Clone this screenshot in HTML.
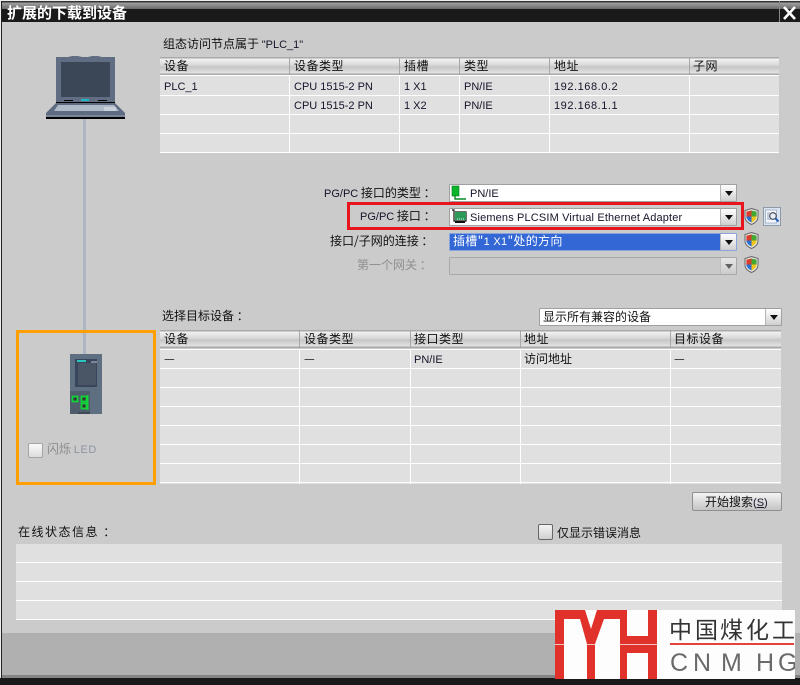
<!DOCTYPE html>
<html><head><meta charset="utf-8"><style>
html,body{margin:0;padding:0;background:#fff}
#p{position:relative;width:800px;height:685px;overflow:hidden;background:#cbcbcb;font:12px "WenQuanYi Zen Hei","Noto Sans CJK SC",sans-serif;color:#111}
#p div,#p svg{position:absolute}
.t{white-space:nowrap;line-height:14px;height:14px}
b{font:11px "Liberation Sans",sans-serif;color:#14142a}
.tb{background:#e0e0e0}
.h{background:linear-gradient(#a9a9a9 0,#a9a9a9 1px,#f1f1f1 2px,#d9d9d9 8px,#c6c6c6 10px,#e2e2e2 16px,#a9a9a9 17px,#a9a9a9 18px);height:18px}
.hs{width:1px;height:18px;background:#a8a8a8}
.rl{height:1px;background:#fff}
.cl{width:1px;background:#fff}
.hd{letter-spacing:.5px}
.cb{background:#fff;border:1px solid #a0a0a0;box-sizing:border-box;height:18px;border-radius:1px}
.ar{background:linear-gradient(#fdfdfd,#e8e8e8 50%,#cfcfcf);border-left:1px solid #b5b5b5;right:0;top:0;bottom:0;width:15px}
.ar:after{content:"";position:absolute;left:4px;top:6px;border:4px solid transparent;border-top:5px solid #111;border-bottom:0}
.ip{letter-spacing:.55px}
</style></head><body><div id="p">
<!-- title -->
<div style="left:0;top:0;width:800px;height:1px;background:#eee"></div>
<div style="left:0;top:1px;width:800px;height:8px;background:linear-gradient(#333 0,#333 1px,#a0a0a0 2px,#6a6a6a 8px)"></div>
<div style="left:0;top:9px;width:800px;height:13px;background:#1a1a1a"></div>
<div class="t" style="left:7px;top:3px;height:20px;line-height:20px;font:bold 15px/20px 'Noto Sans CJK SC',sans-serif;color:#fff">扩展的下载到设备</div>
<div style="left:779px;top:1px;width:1px;height:21px;background:#888"></div>
<svg style="left:780px;top:2px" width="18" height="20"><path d="M4 5L15 17M15 5L4 17" stroke="#fff" stroke-width="2.6"/></svg>
<div style="left:1px;top:1px;width:1px;height:677px;background:#222"></div>
<div style="left:0;top:0;width:1px;height:685px;background:#eee"></div>

<!-- footer -->
<div style="left:2px;top:633px;width:798px;height:42px;background:#b0b0b0"></div>
<div style="left:2px;top:675px;width:798px;height:3px;background:#848484"></div>
<div style="left:0;top:678px;width:800px;height:7px;background:#1a1a1a"></div>

<!-- top table -->
<div class="t" style="left:163px;top:37px">组态访问节点属于 <b>"PLC_1"</b></div>
<div class="tb" style="left:160px;top:76px;width:619px;height:77px"></div>
<div class="h" style="left:160px;top:57px;width:619px"></div>
<div class="hs" style="left:289px;top:57px"></div><div class="hs" style="left:399px;top:57px"></div><div class="hs" style="left:459px;top:57px"></div><div class="hs" style="left:549px;top:57px"></div><div class="hs" style="left:689px;top:57px"></div>
<div class="rl" style="left:160px;top:75px;width:619px"></div>
<div class="rl" style="left:160px;top:95px;width:619px"></div><div class="rl" style="left:160px;top:114px;width:619px"></div><div class="rl" style="left:160px;top:133px;width:619px"></div><div class="rl" style="left:160px;top:152px;width:619px"></div>
<div class="cl" style="left:289px;top:76px;height:77px"></div><div class="cl" style="left:399px;top:76px;height:77px"></div><div class="cl" style="left:459px;top:76px;height:77px"></div><div class="cl" style="left:549px;top:76px;height:77px"></div><div class="cl" style="left:689px;top:76px;height:77px"></div>
<div class="t hd" style="left:164px;top:59px">设备</div><div class="t hd" style="left:294px;top:59px">设备类型</div><div class="t hd" style="left:404px;top:59px">插槽</div><div class="t hd" style="left:464px;top:59px">类型</div><div class="t hd" style="left:554px;top:59px">地址</div><div class="t hd" style="left:693px;top:59px">子网</div>
<div class="t" style="left:164px;top:79px"><b>PLC_1</b></div><div class="t" style="left:294px;top:79px"><b>CPU 1515-2 PN</b></div><div class="t" style="left:404px;top:79px"><b>1 X1</b></div><div class="t" style="left:464px;top:79px"><b>PN/IE</b></div><div class="t ip" style="left:554px;top:79px"><b>192.168.0.2</b></div>
<div class="t" style="left:294px;top:98px"><b>CPU 1515-2 PN</b></div><div class="t" style="left:404px;top:98px"><b>1 X2</b></div><div class="t" style="left:464px;top:98px"><b>PN/IE</b></div><div class="t ip" style="left:554px;top:98px"><b>192.168.1.1</b></div>

<!-- laptop + line -->
<div style="left:83px;top:118px;width:3px;height:236px;background:#aeb6c4"></div>
<svg style="left:40px;top:50px" width="92" height="72" viewBox="40 50 92 72">
<path d="M56 57h12l4-1h6l4 1h6l4-1h6l4 1h13v45H56z" fill="#616d82"/>
<rect x="61" y="62" width="49" height="35" fill="#3b4656"/>
<rect x="56" y="102" width="59" height="1" fill="#000"/>
<rect x="64" y="100" width="9" height="1" fill="#000"/><rect x="98" y="100" width="9" height="1" fill="#000"/>
<rect x="81" y="99" width="8" height="2" fill="#1cb9c4"/>
<path d="M56 103h59l10 10v4H46v-4z" fill="#5f6b80"/>
<path d="M58 105h56l5 6H54z" fill="#b0b9c8"/>
<rect x="104" y="107" width="12" height="4" fill="#c9d0da"/>
<rect x="46" y="115" width="79" height="2" fill="#7c869a"/>
<rect x="46" y="117" width="79" height="2" fill="#000"/>
</svg>

<!-- form -->
<div class="t" style="left:324px;top:186px;width:102px;color:#111"><b>PG/PC</b> 接口的类型 ：</div>
<div class="t" style="left:360px;top:209px"><b>PG/PC</b> 接口 ：</div>
<div class="t" style="left:330px;top:234px">接口/子网的连接 ：</div>
<div class="t" style="left:357px;top:258px;color:#8f8f8f">第一个网关 ：</div>

<div style="left:347px;top:202px;width:397px;height:28px;box-sizing:border-box;border:3px solid #e8141e"></div>
<div class="cb" style="left:449px;top:184px;width:288px"><div class="ar"></div></div>
<div class="cb" style="left:449px;top:208px;width:288px"><div class="ar"></div></div>
<div class="cb" style="left:449px;top:233px;width:288px;background:#3367d6;border-color:#8aa3d8"><div class="ar"></div></div>
<div class="cb" style="left:449px;top:257px;width:288px;background:#c9c9c9;border-color:#a8a8a8"><div class="ar" style="opacity:.55"></div></div>
<svg style="left:451px;top:185px" width="17" height="16"><rect x="1" y="1" width="7" height="10" fill="#0cb52a" stroke="#0a7a1f" stroke-width=".6"/><path d="M4 10v4h11" fill="none" stroke="#0a8a25" stroke-width="1.4"/></svg>
<div class="t" style="left:470px;top:186px"><b>PN/IE</b></div>
<svg style="left:451px;top:209px" width="17" height="15"><path d="M1 1h2v11h12V3H4" fill="none" stroke="#111" stroke-width="1.2"/><rect x="4" y="3" width="11" height="8" fill="#2c9a58"/><path d="M6 10h1M8 10h1M10 10h1M12 10h1" stroke="#dfe" stroke-width="1"/><rect x="4" y="12" width="10" height="2" fill="#111"/></svg>
<div class="t" style="left:470px;top:210px"><b style="letter-spacing:.15px">Siemens PLCSIM Virtual Ethernet Adapter</b></div>
<div class="t" style="left:453px;top:234px;color:#fff;letter-spacing:.3px">插槽"<b style="color:#fff">1 X1</b>"处的方向</div>

<!-- shields -->
<svg style="left:744px;top:208px" width="15" height="17" viewBox="0 0 15 17"><path d="M7.5 .5L14 2.5V9c0 3.5-3 6-6.5 7.5C4 15 1 12.500 1 9V2.500z" fill="#e8e8e8" stroke="#666"/><path d="M7.500 2.400L2.400 3.800V8.500h5.100z" fill="#d8402a"/><path d="M7.500 2.400L12.600 3.800V8.500H7.500z" fill="#45a834"/><path d="M2.400 8.500h5.100V14.500C5 13.500 2.400 11 2.400 8.500z" fill="#2a6fd0"/><path d="M12.600 8.500H7.500V14.500C10 13.500 12.600 11 12.600 8.500z" fill="#f2c41c"/></svg>
<svg style="left:744px;top:232px" width="15" height="17" viewBox="0 0 15 17"><path d="M7.5 .5L14 2.5V9c0 3.5-3 6-6.5 7.5C4 15 1 12.500 1 9V2.500z" fill="#e8e8e8" stroke="#666"/><path d="M7.500 2.400L2.400 3.800V8.500h5.100z" fill="#d8402a"/><path d="M7.500 2.400L12.600 3.800V8.500H7.500z" fill="#45a834"/><path d="M2.400 8.500h5.100V14.500C5 13.500 2.400 11 2.400 8.500z" fill="#2a6fd0"/><path d="M12.600 8.500H7.500V14.500C10 13.500 12.600 11 12.600 8.500z" fill="#f2c41c"/></svg>
<svg style="left:744px;top:256px" width="15" height="17" viewBox="0 0 15 17"><path d="M7.5 .5L14 2.5V9c0 3.5-3 6-6.5 7.5C4 15 1 12.500 1 9V2.500z" fill="#e8e8e8" stroke="#666"/><path d="M7.500 2.400L2.400 3.800V8.500h5.100z" fill="#d8402a"/><path d="M7.500 2.400L12.600 3.800V8.500H7.500z" fill="#45a834"/><path d="M2.400 8.500h5.100V14.500C5 13.500 2.400 11 2.400 8.500z" fill="#2a6fd0"/><path d="M12.600 8.500H7.500V14.500C10 13.500 12.600 11 12.600 8.500z" fill="#f2c41c"/></svg>
<svg style="left:763px;top:207px" width="18" height="19"><rect x=".5" y=".5" width="17" height="18" fill="#dbe5f1" stroke="#8f9aa8"/><rect x="2.500" y="3" width="11" height="13" fill="#f4f7fb" stroke="#8fa0b8" stroke-width=".7"/><path d="M4 6h3M4 8h2M4 10h2M4 12h5" stroke="#6f86a8" stroke-width=".8"/><circle cx="10" cy="9" r="3.300" fill="#e6eef6" stroke="#445" stroke-width="1.100"/><path d="M12.500 11.500l3 3" stroke="#2a5fc0" stroke-width="2"/></svg>

<!-- target devices -->
<div class="t" style="left:162px;top:309px">选择目标设备 ：</div>
<div class="cb" style="left:539px;top:308px;width:243px"><div class="ar"></div><div class="t" style="left:3px;top:1px">显示所有兼容的设备</div></div>

<div class="tb" style="left:160px;top:349px;width:621px;height:135px"></div>
<div class="h" style="left:160px;top:330px;width:621px"></div>
<div class="hs" style="left:299px;top:330px"></div><div class="hs" style="left:410px;top:330px"></div><div class="hs" style="left:520px;top:330px"></div><div class="hs" style="left:670px;top:330px"></div>
<div class="rl" style="left:160px;top:349px;width:621px"></div><div class="rl" style="left:160px;top:368px;width:621px"></div><div class="rl" style="left:160px;top:387px;width:621px"></div><div class="rl" style="left:160px;top:406px;width:621px"></div><div class="rl" style="left:160px;top:425px;width:621px"></div><div class="rl" style="left:160px;top:444px;width:621px"></div><div class="rl" style="left:160px;top:463px;width:621px"></div><div class="rl" style="left:160px;top:482px;width:621px"></div>
<div class="cl" style="left:299px;top:349px;height:135px"></div><div class="cl" style="left:410px;top:349px;height:135px"></div><div class="cl" style="left:520px;top:349px;height:135px"></div><div class="cl" style="left:670px;top:349px;height:135px"></div>
<div class="t hd" style="left:164px;top:332px">设备</div><div class="t hd" style="left:304px;top:332px">设备类型</div><div class="t hd" style="left:414px;top:332px">接口类型</div><div class="t hd" style="left:524px;top:332px">地址</div><div class="t hd" style="left:674px;top:332px">目标设备</div>
<div class="t" style="left:164px;top:352px">—</div><div class="t" style="left:304px;top:352px">—</div><div class="t" style="left:414px;top:352px"><b>PN/IE</b></div><div class="t" style="left:524px;top:352px">访问地址</div><div class="t" style="left:674px;top:352px">—</div>

<!-- orange box + PLC -->
<div style="left:16px;top:330px;width:140px;height:155px;box-sizing:border-box;border:3px solid #ffa000"></div>
<svg style="left:70px;top:354px" width="32" height="60" viewBox="70 354 32 60">
<rect x="70" y="354" width="32" height="60" fill="#5e6f82"/>
<rect x="75" y="359" width="22" height="28" fill="#39455a"/>
<rect x="78" y="363" width="18" height="22" fill="#4a5566"/>
<rect x="77" y="360" width="9" height="2" fill="#29c7c0"/><rect x="91" y="361" width="6" height="2" fill="#7c8896"/>
<rect x="70" y="391" width="20" height="23" fill="#4f5c6c"/>
<rect x="72.500" y="396.500" width="5" height="5" fill="#333" stroke="#12d53a" stroke-width="1.800"/>
<rect x="81.500" y="396.500" width="5" height="5" fill="#333" stroke="#12d53a" stroke-width="1.800"/>
<rect x="81.500" y="403.500" width="5" height="5" fill="#333" stroke="#12d53a" stroke-width="1.800"/>
<rect x="87" y="395" width="1.500" height="15" fill="#12d53a"/>
<rect x="78" y="412" width="12" height="2" fill="#3f4a58"/>
</svg>
<div style="left:28px;top:443px;width:15px;height:15px;box-sizing:border-box;border:1px solid #a5a5a5;border-radius:2px;background:linear-gradient(#fafafa,#dcdcdc)"></div>
<div class="t" style="left:47px;top:442px;color:#8c8c8c">闪烁 <b style="color:#8c94a0;letter-spacing:.6px">LED</b></div>

<!-- search -->
<div style="left:692px;top:492px;width:90px;height:19px;box-sizing:border-box;border:1px solid #8f8f8f;border-radius:2px;background:linear-gradient(#f4f4f4,#dedede 45%,#c4c4c4)"></div>
<div class="t" style="left:705px;top:495px">开始搜索<b>(<u>S</u>)</b></div>

<!-- status -->
<div class="t" style="left:18px;top:525px;letter-spacing:1.5px">在线状态信息 ：</div>
<div style="left:538px;top:524px;width:15px;height:16px;box-sizing:border-box;border:1px solid #666;border-radius:2px;background:linear-gradient(#f4f4f4,#cfcfcf)"></div>
<div class="t" style="left:557px;top:526px">仅显示错误消息</div>
<div class="tb" style="left:16px;top:544px;width:766px;height:76px"></div>
<div class="rl" style="left:16px;top:562px;width:766px"></div><div class="rl" style="left:16px;top:581px;width:766px"></div><div class="rl" style="left:16px;top:600px;width:766px"></div><div class="rl" style="left:16px;top:619px;width:766px"></div>

<!-- logo -->
<svg style="left:555px;top:610px" width="240" height="69" viewBox="555 610 240 69">
<rect x="555" y="610" width="240" height="69" fill="#fdfdfd"/>
<path d="M555 610H585L591 629L597 610H657V679H648V653H627V679H620V619H604L595 644V679H587V644L580 619H564V679H555ZM627 619V636H648V610H627Z" fill="#e0312a" fill-rule="evenodd"/>
<rect x="555" y="644" width="102" height="1" fill="#fff" opacity=".7"/>
<rect x="670" y="643" width="124" height="2" fill="#e4433c"/>
<text x="669 695 720 746 772" y="638" font-family="'Noto Sans CJK SC',sans-serif" font-size="23" fill="#333">中国煤化工</text>
<text x="670 693 721 756 778" y="671" font-family="'Liberation Sans',sans-serif" font-size="25" fill="#6a6a6a">CNMHG</text>
</svg>
</div></body></html>
